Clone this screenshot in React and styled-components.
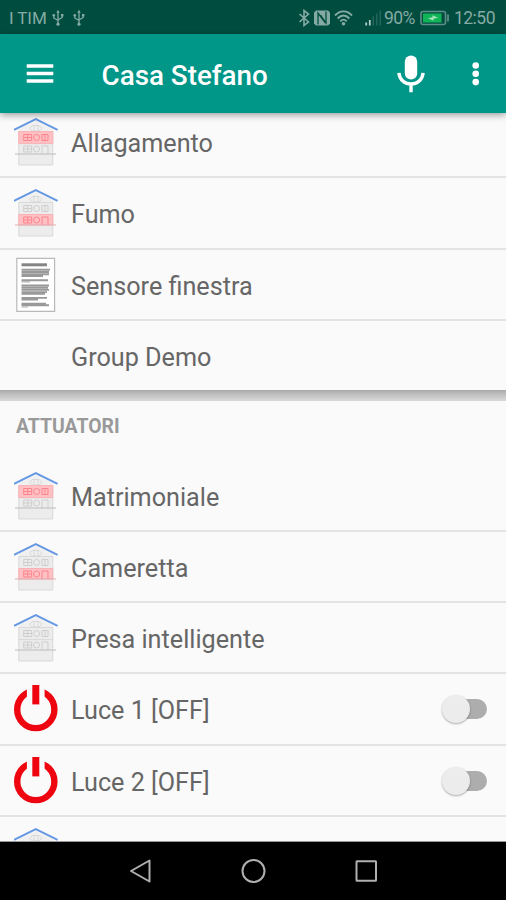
import React from "react";
import styled, { createGlobalStyle } from "styled-components";

const teal = "#009688";
const d_teal = "#004d40";
const paper = "#fafafa";
const line = "#e3e3e3";
const ink = "#666";
const status = "#85aaa3";
const red = "#ee0510";

const base = `Roboto, "Liberation Sans", sans-serif`;

const GlobalStyle = createGlobalStyle`
  * {
    box-sizing: border-box;
  }

  body {
    margin: 0;
    background: ${paper};
    font-family: ${base};
  }
`;

const Screen = styled.div`
  width: 506px;
  height: 900px;
  display: flex;
  flex-direction: column;
  overflow: hidden;
  background: ${paper};
`;

const StatusBar = styled.div`
  flex: none;
  height: 34px;
  padding: 1px 11px 0 9px;
  display: flex;
  align-items: center;
  justify-content: space-between;
  background: ${d_teal};
  color: ${status};
`;

const StatusGroup = styled.div`
  display: flex;
  align-items: center;
`;

const Carrier = styled.span`
  font-size: 17px;
  letter-spacing: -0.1px;
  margin-right: 5px;
`;

const UsbIcon = styled.svg`
  width: 12px;
  height: 18px;
  margin-right: 9px;
`;

const StatusIcon = styled.svg`
  width: ${(props) => props.$width}px;
  height: 18px;
  margin-right: ${(props) => props.$gap}px;
`;

const Percent = styled.span`
  width: 32px;
  font-size: 17.5px;
  letter-spacing: -0.5px;
  margin-right: 4px;
`;

const Clock = styled.span`
  font-size: 17.5px;
  letter-spacing: -0.5px;
`;

const Toolbar = styled.header`
  flex: none;
  height: 79px;
  padding: 0 20px 0 26px;
  display: flex;
  align-items: center;
  background: ${teal};
  box-shadow: 0 2px 7px rgba(0, 0, 0, 0.38);
  z-index: 1;
`;

const ToolIcon = styled.svg`
  flex: none;
  width: ${(props) => props.$width}px;
  height: 40px;
  margin-left: ${(props) => props.$gap || 0}px;
`;

const Title = styled.h1`
  flex: 1;
  margin: 4px 0 0 47.5px;
  color: #fff;
  font-size: 27.8px;
  font-weight: 500;
  line-height: 32px;
`;

const Content = styled.main`
  flex: 1;
  min-height: 0;
  overflow: hidden;
  border-bottom: 1px solid #999;
`;

const List = styled.ul`
  list-style: none;
  padding: 0;
  margin: ${(props) => (props.$scrolled ? "-6px" : "0")} 0 0;
`;

const Row = styled.li`
  height: 71.25px;
  padding: 1px 19px 0 14px;
  display: flex;
  align-items: center;
  border-bottom: 2px solid ${line};

  &:last-child {
    border-bottom-color: transparent;
  }
`;

const Glyph = styled.svg`
  flex: none;
  width: 44px;
  height: 56px;
  margin-right: 13px;
`;

const Label = styled.span`
  flex: 1;
  color: ${ink};
  font-size: 25.2px;
  line-height: 32px;
  padding-top: 4px;
`;

const Divider = styled.div`
  height: 11px;
  margin-top: -2px;
  background: linear-gradient(#a9a9a9, #bdbdbd 35%, #d9d9d9);
`;

const SectionTitle = styled.h2`
  height: 59.5px;
  margin: 0;
  padding: 0 16px 9px;
  display: flex;
  align-items: center;
  color: #999;
  font-size: 19.4px;
  font-weight: 700;
`;

const Track = styled.div`
  width: 42px;
  height: 20px;
  display: flex;
  align-items: center;
  border-radius: 10px;
  background: #adadad;
`;

const Thumb = styled.div`
  flex: none;
  width: 28px;
  height: 28px;
  margin-left: -3px;
  border-radius: 50%;
  background: #ececec;
  box-shadow: 0 1px 2px rgba(0, 0, 0, 0.32);
`;

const NavBar = styled.nav`
  flex: none;
  height: 58px;
  display: flex;
  align-items: center;
  justify-content: center;
  gap: 88px;
  background: #000;
`;

const NavIcon = styled.svg`
  width: 25px;
  height: 26px;
  fill: none;
  stroke: #b0b0b0;
  stroke-width: 2;
`;

const Windows = ({ y, color, door }) => (
  <g fill="none" stroke={color} strokeWidth="1">
    <path d={`M9.7 ${y}h8v6h-8zM13.7 ${y}v6M9.7 ${y + 3}h8`} />
    <circle cx="22.6" cy={y + 3} r="3" />
    <path d={door ? `M28 ${y + 8}v-8h6v8` : `M28 ${y}h6v6h-6zM31 ${y}v6`} />
  </g>
);

const House = ({ alarm }) => (
  <Glyph viewBox="0 0 44 56">
    <path d="M5 18V15L22 7l17 8v3z" fill="#f0f0f0" />
    <path
      d="M4.8 17.5h34v33.5h-34z"
      fill="#ececec"
      stroke="#d6d6d6"
      strokeWidth="0.9"
    />
    <path
      d="M15.500 14.500l3-3h6.500l3 3-3 2.500h-6.500zM20 11.500v5.500M24 11.500v5.500M4.800 29.600h34"
      fill="none"
      stroke="#d2d2d2"
      strokeWidth="0.8"
    />
    {alarm === "upper" && (
      <path d="M4.8 17.6h34v12h-34z" fill="#ffc0c3" stroke="#fbb2b6" />
    )}
    {alarm === "lower" && (
      <path d="M4.8 29.5h34v10.500h-34z" fill="#ffc0c3" stroke="#fbb2b6" />
    )}
    <Windows y={20.5} color={alarm === "upper" ? "#fa858c" : "#cecece"} />
    <Windows y={32} door color={alarm === "lower" ? "#fa858c" : "#cecece"} />
    <path
      d="M1 40h41"
      stroke={alarm === "lower" ? "#e0adb0" : "#bcbcbc"}
      strokeWidth="1"
    />
    <path
      d="M0 15.900L21.800 5.100 43.600 15.900"
      fill="none"
      stroke="#6597e2"
      strokeWidth="2"
    />
  </Glyph>
);

const Document = () => (
  <Glyph viewBox="0 0 44 56">
    <path d="M2.8 1.3h37.8v53H2.8z" fill="#fff" stroke="#b9b9b9" strokeWidth="1.2" />
    <path d="M7.5 7.8H33" stroke="#858585" strokeWidth="3" />
    <path
      d="M7.5 12.8H36M7.5 15H35M7.5 17.2H35M7.5 19H29M7.5 23.3H34M7.5 28.500H35M7.5 30.700H34M7.5 32.900H35M7.5 35.100H33M7.5 36.700H31M7.5 40.900H33M7.5 42.500H24M7.5 46.700H32M7.5 48.200H35"
      stroke="#999"
      strokeWidth="1.9"
    />
    <path d="M7.5 24.8H16M7.5 50H14" stroke="#b0b0b0" strokeWidth="1.2" />
  </Glyph>
);

const Power = () => (
  <Glyph viewBox="0 0 44 56">
    <circle cx="21.8" cy="28.5" r="18.6" fill="none" stroke={red} strokeWidth="6.4" />
    <path d="M12.9 3h17.700v16.500H12.900z" fill={paper} />
    <path d="M18.3 4h7v19.4h-7z" fill={red} />
  </Glyph>
);

const Usb = () => (
  <UsbIcon viewBox="0 0 12 18" fill="none" stroke={status} strokeWidth="1.3">
    <path d="M6 3v12M1.8 6.5V9L6 11.5M10.2 6.5V8.5L6 11" />
    <path d="M6 0.8l1.7 3H4.3z" fill={status} stroke="none" />
    <circle cx="6" cy="15.2" r="1.6" fill={status} stroke="none" />
    <circle cx="1.8" cy="6.3" r="1.3" fill={status} stroke="none" />
    <path d="M9 5h2.4v2.4H9z" fill={status} stroke="none" />
  </UsbIcon>
);

const Switch = () => (
  <Track>
    <Thumb />
  </Track>
);

const sensors = [
  { name: "Allagamento", icon: <House alarm="upper" /> },
  { name: "Fumo", icon: <House alarm="lower" /> },
  { name: "Sensore finestra", icon: <Document /> },
  { name: "Group Demo", icon: <Glyph /> },
];

const actuators = [
  { name: "Matrimoniale", icon: <House alarm="upper" /> },
  { name: "Cameretta", icon: <House alarm="lower" /> },
  { name: "Presa intelligente", icon: <House /> },
  { name: "Luce 1 [OFF]", icon: <Power />, toggle: true },
  { name: "Luce 2 [OFF]", icon: <Power />, toggle: true },
  { name: "", icon: <House /> },
];

const Rows = ({ items }) =>
  items.map((item) => (
    <Row key={item.name}>
      {item.icon}
      <Label>{item.name}</Label>
      {item.toggle && <Switch />}
    </Row>
  ));

const App = () => (
  <Screen>
    <GlobalStyle />
    <StatusBar>
      <StatusGroup>
        <Carrier>I TIM</Carrier>
        <Usb />
        <Usb />
      </StatusGroup>
      <StatusGroup>
        <StatusIcon viewBox="0 0 12 18" $width={12} $gap={4}>
          <path
            d="M1.5 5l9 8L6 16.5v-15L10.5 5l-9 8"
            fill="none"
            stroke={status}
            strokeWidth="1.6"
          />
        </StatusIcon>
        <StatusIcon viewBox="0 0 16 18" $width={16} $gap={4}>
          <path d="M0 3.5L2 1.5h12l2 2v11l-2 2H2l-2-2z" fill={status} />
          <path
            d="M4 15.5V4l7.5 10M12 2.5v11.5L6.500 6"
            fill="none"
            stroke={d_teal}
            strokeWidth="1.3"
          />
        </StatusIcon>
        <StatusIcon viewBox="0 0 19 18" $width={19} $gap={12}>
          <path
            d="M1 6.5C6 1 13 1 18 6.5M3.7 9.5c3.5-4 8.1-4 11.6 0M6.3 12.3c2-2.2 4.4-2.2 6.4 0"
            fill="none"
            stroke={status}
            strokeWidth="1.9"
          />
          <circle cx="9.5" cy="14.8" r="1.8" fill={status} />
        </StatusIcon>
        <StatusIcon viewBox="0 0 16 18" $width={16} $gap={3}>
          <path d="M1.2 16.5v-3M4.8 16.5V11" stroke="#b5cbc7" strokeWidth="1.8" />
          <path
            d="M8.3 16.5v-9M11.8 16.5v-12M15.2 16.5v-15"
            stroke="#2a6a60"
            strokeWidth="1.3"
          />
        </StatusIcon>
        <Percent>90%</Percent>
        <StatusIcon viewBox="0 0 29 18" $width={29} $gap={5}>
          <rect
            x="1"
            y="2.5"
            width="24.5"
            height="13"
            rx="2"
            fill="none"
            stroke="#5e8e86"
            strokeWidth="1.6"
          />
          <path d="M3 4.5h18.5v9H3z" fill="#10b457" />
          <path d="M28 5.5v7" stroke="#5e8e86" strokeWidth="1.8" />
          <path d="M8 9.3l4.500-1V6.300l5.500 2.500-4.500 1v2z" fill="#a5e3ba" />
        </StatusIcon>
        <Clock>12:50</Clock>
      </StatusGroup>
    </StatusBar>

    <Toolbar>
      <ToolIcon viewBox="0 0 28 40" $width={28}>
        <path
          d="M0.7 12h26.6M0.7 19.5h26.6M0.7 27h26.6"
          stroke="#fff"
          strokeWidth="3.6"
        />
      </ToolIcon>
      <Title>Casa Stefano</Title>
      <ToolIcon viewBox="0 0 30 40" $width={30}>
        <rect x="8.800" y="1.500" width="12.400" height="24" rx="6.200" fill="#fff" />
        <path
          d="M2.900 18.800c1.400 15 22.800 15 24.200 0M15 29v9.200"
          fill="none"
          stroke="#fff"
          strokeWidth="3.4"
        />
      </ToolIcon>
      <ToolIcon viewBox="0 0 20 40" $width={20} $gap={40} fill="#fff">
        <circle cx="9.7" cy="11.5" r="3.3" />
        <circle cx="9.7" cy="19.8" r="3.3" />
        <circle cx="9.7" cy="28.1" r="3.3" />
      </ToolIcon>
    </Toolbar>

    <Content>
      <List $scrolled>
        <Rows items={sensors} />
      </List>
      <Divider />
      <SectionTitle>ATTUATORI</SectionTitle>
      <List>
        <Rows items={actuators} />
      </List>
    </Content>

    <NavBar>
      <NavIcon viewBox="0 0 25 26">
        <path d="M3 13l18.500-10.500v21z" strokeLinejoin="round" />
      </NavIcon>
      <NavIcon viewBox="0 0 25 26">
        <circle cx="12.5" cy="13" r="11" />
      </NavIcon>
      <NavIcon viewBox="0 0 25 26">
        <rect x="2.500" y="3.200" width="19.500" height="19.500" rx="0.500" />
      </NavIcon>
    </NavBar>
  </Screen>
);

export default App;
